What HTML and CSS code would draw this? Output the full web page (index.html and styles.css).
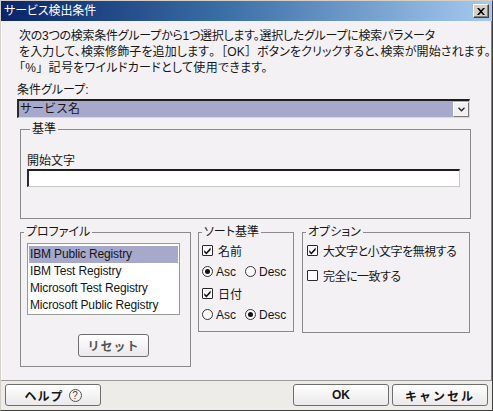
FILE: index.html
```html
<!DOCTYPE html>
<html lang="ja">
<head>
<meta charset="utf-8">
<title>サービス検出条件</title>
<link rel="stylesheet" href="styles.css">
</head>
<body>
<div class="window">
  <div class="titlebar">
    <span class="title">サービス検出条件</span>
    <span class="close"><svg width="8" height="7" viewBox="0 0 8 7"><path d="M0 0h2l2 2.3 2-2.3h2l-3 3.5 3 3.5h-2l-2-2.3-2 2.3h-2l3-3.5z" fill="#000"/></svg></span>
  </div>
  <div class="content">
    <p class="desc"><span class="line1">次の3つの検索条件グループから1つ選択します。選択したグループに検索パラメータ</span><br><span class="line2">を入力して、検索修飾子を追加します<span class="np">。［OK］</span>ボタンをクリックすると、検索が開始されます。</span><br><span class="line3">「%<span class="np">」</span>記号をワイルドカードとして使用できます。</span></p>
    <div class="field-label">条件グループ:</div>
    <div class="select">
      <span class="select-value">サービス名</span>
      <span class="select-btn"><svg width="7" height="5" viewBox="0 0 7 5"><polyline points="0.5,0.8 3.5,3.8 6.5,0.8" fill="none" stroke="#222" stroke-width="1.3"/></svg></span>
    </div>
    <fieldset class="group criteria">
      <legend>基準</legend>
      <div class="input-label">開始文字</div>
      <div class="textbox"></div>
    </fieldset>
    <div class="row">
      <fieldset class="group profile">
        <legend>プロファイル</legend>
        <ul class="list">
          <li class="selected">IBM Public Registry</li>
          <li>IBM Test Registry</li>
          <li>Microsoft Test Registry</li>
          <li>Microsoft Public Registry</li>
        </ul>
        <button class="btn reset">リセット</button>
      </fieldset>
      <fieldset class="group sort">
        <legend>ソート基準</legend>
        <div class="opts">
          <div class="opt"><span class="cb"><svg width="9" height="9" viewBox="0 0 9 9"><path d="M1.2 4.2L3.4 6.3L7.6 1.6V3.9L3.4 8.4L1.2 6.3Z" fill="#111"/></svg></span>名前</div>
          <div class="opt"><span class="rb on"></span><span class="rtext">Asc</span><span class="rb"></span><span class="rtext">Desc</span></div>
          <div class="opt"><span class="cb"><svg width="9" height="9" viewBox="0 0 9 9"><path d="M1.2 4.2L3.4 6.3L7.6 1.6V3.9L3.4 8.4L1.2 6.3Z" fill="#111"/></svg></span>日付</div>
          <div class="opt"><span class="rb"></span><span class="rtext">Asc</span><span class="rb on"></span><span class="rtext">Desc</span></div>
        </div>
      </fieldset>
      <fieldset class="group options">
        <legend>オプション</legend>
        <div class="opts">
          <div class="opt"><span class="cb"><svg width="9" height="9" viewBox="0 0 9 9"><path d="M1.2 4.2L3.4 6.3L7.6 1.6V3.9L3.4 8.4L1.2 6.3Z" fill="#111"/></svg></span>大文字と小文字を無視する</div>
          <div class="opt"><span class="cb"></span>完全に一致する</div>
        </div>
      </fieldset>
    </div>
  </div>
  <div class="footer">
    <button class="btn help">ヘルプ<span class="qmark">?</span></button>
    <span class="spacer"></span>
    <button class="btn ok">OK</button>
    <button class="btn cancel">キャンセル</button>
  </div>
</div>
</body>
</html>
```

FILE: styles.css
```css
* { box-sizing: border-box; }
html, body { margin: 0; padding: 0; }
body {
  width: 493px;
  height: 411px;
  overflow: hidden;
  font-family: "Liberation Sans", "Noto Sans CJK JP", sans-serif;
  font-size: 12px;
  color: #161616;
  background: #f4f1f4;
}
.window {
  width: 493px;
  height: 411px;
  display: flex;
  flex-direction: column;
  border-top: 1px solid #d4d0c8;
  border-left: 1px solid #d4d0c8;
  border-right: 1px solid #404040;
  border-bottom: 1px solid #404040;
  box-shadow: inset 1px 1px 0 #fff, inset -1px -1px 0 #808080;
  background: #f4f1f4;
}
.titlebar {
  height: 20px;
  flex: none;
  display: flex;
  align-items: center;
  justify-content: space-between;
  padding: 0 3px 0 3px;
  background: linear-gradient(to right, #0a246a 0%, #3a6ea5 45%, #a6caf0 100%);
  color: #fff;
}
.title {
  font-size: 12px;
  line-height: 14px;
  letter-spacing: -0.1px;
  font-feature-settings: "palt";
}
.close {
  width: 16px;
  height: 14px;
  display: flex;
  align-items: center;
  justify-content: center;
  background: #d4d0c8;
  border: 1px solid;
  border-color: #fff #404040 #404040 #fff;
  box-shadow: inset -1px -1px 0 #808080;
}
.content {
  flex: 1;
  padding: 7px 0 0 16px;
}
.desc {
  margin: 0 0 0 2px;
  line-height: 16px;
  white-space: nowrap;
  font-feature-settings: "palt";
}
.desc .np { font-feature-settings: normal; }
.line1 { letter-spacing: -0.25px; }
.line2 { letter-spacing: 0.1px; }
.line3 { letter-spacing: 0.3px; }
.field-label {
  margin-top: 6px;
  line-height: 16px;
  font-feature-settings: "palt";
}
.select {
  margin-top: 1px;
  width: 453px;
  height: 19px;
  display: flex;
  align-items: center;
  justify-content: space-between;
  background: #a6a9cb;
  border-style: solid;
  border-width: 2px 1px 1px 2px;
  border-color: #1e1e1e #d8d8d8 #d8d8d8 #2a2a2a;
  padding-left: 1px;
}
.select-value { line-height: 14px; }
.select-btn {
  width: 16px;
  height: 15px;
  display: flex;
  align-items: center;
  justify-content: center;
  background: #f2f0f2;
  border: 1px solid;
  border-color: #fff #7a7a7a #7a7a7a #fff;
}
.group {
  margin: 0;
  padding: 0;
  min-width: 0;
  border: 1px solid #8a8a8a;
}
.group legend {
  margin-left: 3px;
  padding: 0 2px;
  line-height: 14px;
  font-size: 12px;
  font-feature-settings: "palt";
}
.criteria {
  margin: 4px 0 0 3px;
  width: 451px;
  height: 97px;
  padding: 18px 0 0 6px;
}
.input-label { line-height: 15px; font-feature-settings: "palt"; }
.textbox {
  width: 433px;
  height: 18px;
  background: #fff;
  border-style: solid;
  border-width: 2px 1px 1px 2px;
  border-color: #1e1e1e #c8c8c8 #c8c8c8 #2a2a2a;
}
.row {
  display: flex;
  align-items: flex-start;
  margin: 6px 0 0 3px;
}
.profile { width: 171px; height: 142px; }
.sort { width: 96px; height: 107px; margin-left: 7px; }
.options { width: 168px; height: 108px; margin-left: 8px; }
.list {
  list-style: none;
  margin: 4px 0 0 6px;
  padding: 2px 1px 0 1px;
  width: 153px;
  height: 72px;
  background: #fff;
  border: 1px solid #9a9a9a;
  font-size: 12px;
  letter-spacing: -0.15px;
}
.list li {
  height: 17px;
  line-height: 17px;
  padding-left: 1px;
  white-space: nowrap;
}
.list li.selected { background: #a6a9cb; }
.btn {
  font-family: "Liberation Sans", "Noto Sans CJK JP", sans-serif;
  font-size: 12px;
  font-weight: bold;
  color: #161616;
  height: 22px;
  padding: 0;
  border: 1px solid #6e6e6e;
  border-radius: 3px;
  background: linear-gradient(#ffffff, #ebe9eb);
  display: flex;
  align-items: center;
  justify-content: center;
}
.reset {
  margin: 19px 0 0 57px;
  width: 71px;
  height: 23px;
  color: #555;
  letter-spacing: 1px;
}
.opts { padding-top: 1px; }
.sort .opts { padding-left: 3px; }
.options .opts { padding-left: 4px; }
.opt {
  display: flex;
  align-items: center;
  height: 21px;
  white-space: nowrap;
  font-feature-settings: "palt";
}
.sort .opt:nth-child(3) { margin-top: 1px; }
.options .opt { letter-spacing: -0.5px; }
.options .opt + .opt { margin-top: 4px; }
.cb {
  width: 11px;
  height: 11px;
  flex: none;
  margin-right: 5px;
  border: 1px solid #2a2a2a;
  border-radius: 1px;
  background: #fcfcfc;
  display: flex;
  align-items: center;
  justify-content: center;
}
.rb {
  width: 11px;
  height: 11px;
  flex: none;
  margin-right: 3px;
  border: 1px solid #333;
  border-radius: 50%;
  background: #fcfcfc;
  display: flex;
  align-items: center;
  justify-content: center;
}
.rb.on::after {
  content: "";
  width: 5px;
  height: 5px;
  border-radius: 50%;
  background: #111;
}
.rtext { margin-right: 9px; }
.footer {
  flex: none;
  height: 30px;
  display: flex;
  align-items: flex-start;
  padding: 3px 4px 0 4px;
  border-top: 1px solid #9a9a9a;
  background: #eeece8;
}
.spacer { flex: 1; }
.help { width: 96px; letter-spacing: 1px; }
.qmark {
  width: 13px;
  height: 13px;
  margin-left: 5px;
  border: 1px solid #555;
  border-radius: 50%;
  font-size: 10px;
  font-weight: normal;
  line-height: 11px;
  letter-spacing: 0;
  color: #444;
  text-align: center;
}
.ok { width: 96px; }
.cancel { width: 96px; margin-left: 3px; letter-spacing: 2px; }
```
